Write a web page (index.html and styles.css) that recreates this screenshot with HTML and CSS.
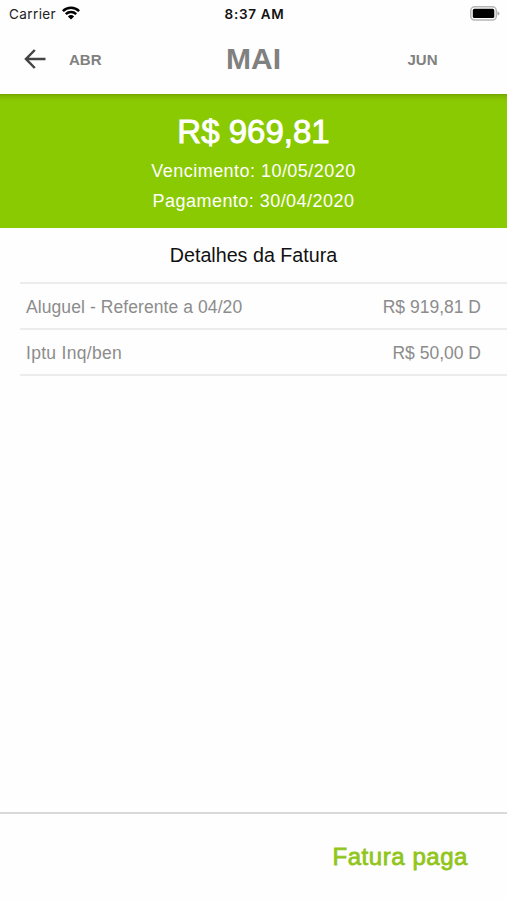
FILE: index.html
```html
<!DOCTYPE html>
<html lang="pt-BR">
<head>
<meta charset="utf-8">
<title>Fatura</title>
<link rel="stylesheet" href="styles.css">
</head>
<body>
<div class="screen">
  <div class="status">
    <div class="carrier"><span>Carrier</span>
      <svg class="wifi" width="18" height="14" viewBox="0 0 18 14" fill="none" stroke="#000" stroke-width="2.5"><path d="M.9 5.1a11.6 11.6 0 0 1 16.2 0"/><path d="M3.8 8.2a7.5 7.5 0 0 1 10.4 0"/><path d="M9 13.6L5.9 10.5a4.5 4.5 0 0 1 6.2 0z" fill="#000" stroke="none"/></svg>
    </div>
    <time class="clock">8:37 AM</time>
    <svg class="battery" width="31" height="15" viewBox="0 0 31 15"><rect x="1.8" y=".8" width="25.5" height="13.2" rx="3.8" fill="#fff" stroke="#b5b5b5" stroke-width="1.5"/><rect x="3.8" y="2.8" width="21.5" height="9.2" rx="1.6"/><path d="M28.5 5.2q2 .7 2 2.2t-2 2.2z" fill="#aaa"/></svg>
  </div>
  <header class="months">
    <svg class="back" width="22" height="20" viewBox="0 0 22 20" fill="none" stroke="#444" stroke-width="2.5"><path d="M21.5 10H2.2M10.8 1L2 10l8.8 9"/></svg>
    <span class="month prev">ABR</span>
    <h1 class="current">MAI</h1>
    <span class="month next">JUN</span>
  </header>
  <section class="summary">
    <div class="total">R$ 969,81</div>
    <div class="date due">Vencimento: 10/05/2020</div>
    <div class="date paid">Pagamento: 30/04/2020</div>
  </section>
  <main class="details">
    <h2 class="heading">Detalhes da Fatura</h2>
    <ul class="items">
      <li class="item"><span class="name">Aluguel - Referente a 04/20</span><span class="amount">R$ 919,81 D</span></li>
      <li class="item"><span class="name short">Iptu Inq/ben</span><span class="amount">R$ 50,00 D</span></li>
    </ul>
  </main>
  <footer class="footer"><span class="paid-label">Fatura paga</span></footer>
</div>
</body>
</html>
```
FILE: styles.css
```css
* { box-sizing: border-box; }
body, h1, h2, ul { margin: 0; padding: 0; }
body {
  font-family: "Liberation Sans", Arial, sans-serif;
  background: #fefefe;
}
.screen { width: 507px; height: 900px; display: flex; flex-direction: column; overflow: hidden; white-space: nowrap; }
.status {
  height: 27px;
  display: grid;
  grid-template-columns: 1fr auto 1fr;
  align-items: center;
  padding: 0 7px 0 9px;
  font-family: Inter, sans-serif;
}
.carrier { display: flex; align-items: center; gap: 6px; font-size: 13.5px; letter-spacing: .4px; color: #222; }
.wifi { margin-top: -2px; }
.clock { font-size: 13.5px; letter-spacing: .7px; font-weight: 600; color: #111; }
.battery { justify-self: end; }
.months {
  height: 67px;
  padding-bottom: 3px;
  display: grid;
  grid-template-columns: 69px 100px 169px 169px;
  align-items: center;
  color: #808080;
}
.back { margin-left: 24px; }
.month { font-size: 15px; font-weight: 700; }
.current { font-size: 30px; line-height: 64px; font-weight: 700; text-align: center; }
.next { text-align: center; }
.summary {
  height: 134px;
  padding-top: 18px;
  background: linear-gradient(#73a503 0, #7eb602 2px, #87c402 5px, #8aca03 9px);
  color: #fff;
  text-align: center;
}
.total { font-size: 33px; line-height: 39px; -webkit-text-stroke: .9px #fff; }
.date { font-size: 18px; line-height: 30.5px; letter-spacing: .46px; }
.due { margin-top: 4.5px; }
.details { flex: 1; }
.heading { height: 53.5px; font-size: 19.7px; line-height: 54px; font-weight: 400; text-align: center; color: #111; }
.items { list-style: none; margin-left: 20px; border-top: 2px solid #ececec; }
.item {
  height: 46.3px;
  display: flex;
  justify-content: space-between;
  align-items: center;
  padding: 3px 26px 0 6px;
  border-bottom: 2px solid #ececec;
  font-size: 17.5px;
  color: #8c8c8c;
}
.name { letter-spacing: .08px; }
.short { letter-spacing: .3px; }
.footer { height: 88px; padding: 0 39px; border-top: 2px solid #dadada; text-align: right; }
.paid-label { font-size: 24px; line-height: 86px; letter-spacing: .55px; color: #91c51b; -webkit-text-stroke: .8px #91c51b; }
```
